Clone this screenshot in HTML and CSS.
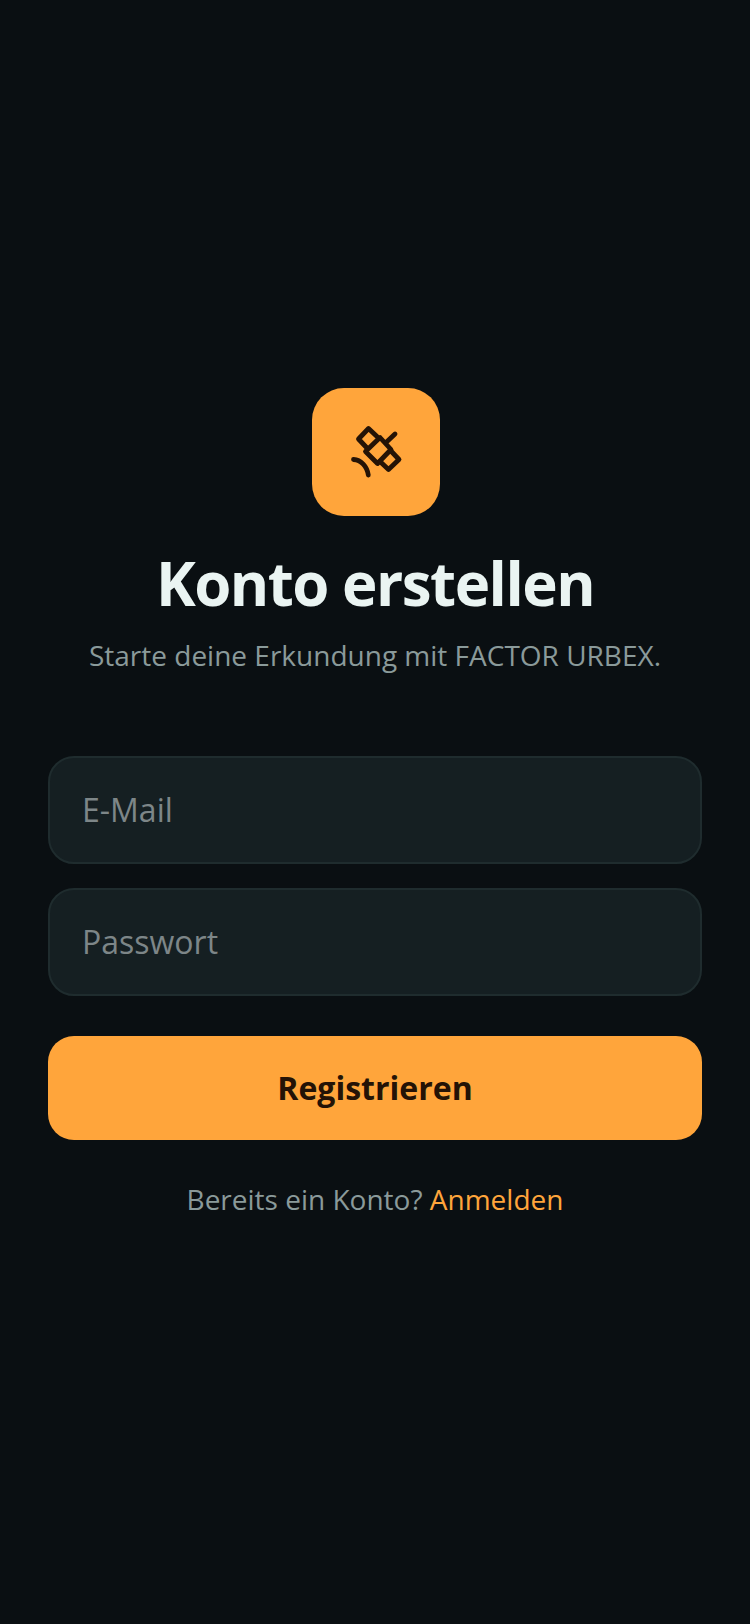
FILE: index.html
```html
<!DOCTYPE html>
<html lang="de">
<head>
    <meta charset="UTF-8">
    <meta name="viewport" content="width=device-width, initial-scale=1.0">
    <title>Konto erstellen</title>
    <link rel="stylesheet" href="styles.css">
</head>
<body>
    <main class="screen">
        <div class="logo">
            <svg class="logo-icon" viewBox="0 0 64 64" fill="none" stroke="#241306" stroke-width="4.8" stroke-linecap="round" stroke-linejoin="round">
                <path d="M33 16.500 24.500 8.500 14.500 19 23 28"/>
                <path d="M36 17.500 47 29.500 33.500 43.500 21.500 31.500Z"/>
                <path d="M47 31 55 39.500 44.500 49.500 36 41.500"/>
                <path d="M42 22.500 51 14"/>
                <path d="M9.500 39.500C17 40 23 46 24.300 55"/>
            </svg>
        </div>
        <h1 class="title">Konto erstellen</h1>
        <p class="subtitle">Starte deine Erkundung mit FACTOR URBEX.</p>

        <form class="form">
            <input class="field" type="email" placeholder="E-Mail">
            <input class="field" type="password" placeholder="Passwort">
            <button class="submit" type="button">Registrieren</button>
        </form>

        <p class="switch">Bereits ein Konto? <a class="switch-link" href="#">Anmelden</a></p>
    </main>
</body>
</html>
```

FILE: styles.css
```css
* {
    box-sizing: border-box;
}

body {
    margin: 0;
    min-height: 1624px;
    background-color: #0a0f12;
    font-family: "Open Sans", sans-serif;
}

.screen {
    display: flex;
    flex-direction: column;
    align-items: center;
    padding: 388px 48px 0;
}

.logo {
    width: 128px;
    height: 128px;
    margin-left: 2px;
    border-radius: 32px;
    background-color: #ffa53b;
    display: flex;
    align-items: center;
    justify-content: center;
}

.logo-icon {
    width: 64px;
    height: 64px;
}

.title {
    margin: 29px 0 0;
    font-size: 60px;
    line-height: 76px;
    font-weight: 700;
    letter-spacing: -1.5px;
    color: #eaf4f2;
}

.subtitle {
    margin: 14px 0 0;
    font-size: 28px;
    line-height: 40px;
    color: #8a9a9a;
}

.form {
    width: 100%;
    margin-top: 81px;
    display: flex;
    flex-direction: column;
    gap: 24px;
}

.field {
    width: 100%;
    height: 108px;
    padding: 0 32px 2px;
    border: 2px solid #1f2c2e;
    border-radius: 26px;
    background-color: #151f22;
    font-family: inherit;
    font-size: 32px;
    color: #eaf4f2;
}

.field::placeholder {
    color: #7d8688;
    opacity: 1;
}

.submit {
    height: 104px;
    margin-top: 16px;
    padding: 0 0 2px;
    border: none;
    border-radius: 26px;
    background-color: #ffa53b;
    font-family: inherit;
    font-size: 32px;
    font-weight: 700;
    color: #241306;
}

.switch {
    margin: 39px 0 0;
    font-size: 28px;
    line-height: 40px;
    color: #8a9a9a;
}

.switch-link {
    color: #ffa53b;
    text-decoration: none;
}
```
